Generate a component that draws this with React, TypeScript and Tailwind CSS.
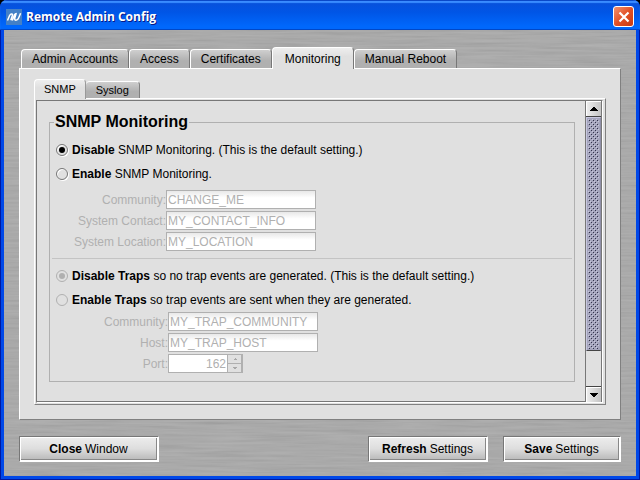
import React, { useState } from 'react';

const FONT = "font-['Liberation_Sans',Arial,sans-serif]";

function BrushedMetal() {
  return (
    <svg className="absolute inset-0 h-full w-full" preserveAspectRatio="none" aria-hidden="true">
      <filter id="brushed" x="0" y="0" width="100%" height="100%">
        <feTurbulence type="fractalNoise" baseFrequency="0.016 0.4" numOctaves="3" seed="8" />
        <feColorMatrix values="0.22 0 0 0 0.53  0.22 0 0 0 0.53  0.22 0 0 0 0.53  0 0 0 0 1" colorInterpolationFilters="sRGB" />
      </filter>
      <rect width="100%" height="100%" fill="#a2a2a2" />
      <rect width="100%" height="100%" filter="url(#brushed)" opacity="0.55" />
    </svg>
  );
}

function AppIcon() {
  return (
    <svg className="h-4 w-4 shrink-0" viewBox="0 0 16 16" aria-hidden="true">
      <rect width="16" height="16" fill="#4480c6" />
      <path d="M1.5 11.5 L3.6 6.5 Q4.6 4.5 6 5 Q6.8 5.4 6.3 6.8 L4.8 11.2 M6.3 11.5 L8.6 5.6 Q9.3 4.4 10.2 4.4 L8.8 9 Q8.3 11.2 10 11.2 Q11.8 11.2 12.6 9 L14.6 4.2" fill="none" stroke="#fff" strokeWidth="1.5" strokeLinejoin="round" />
    </svg>
  );
}

type TabProps = { label: string; selected: boolean; onSelect: () => void };

function MainTab({ label, selected, onSelect }: TabProps) {
  return (
    <button
      type="button"
      role="tab"
      aria-selected={selected}
      onClick={onSelect}
      className={
        selected
          ? 'relative -mb-px flex h-[22px] items-center rounded-t-sm border-t border-r border-l border-t-white border-r-[#777] border-l-white bg-linear-to-b from-[#eeeeee] to-[#e0e0e0] to-40% px-3'
          : 'flex h-[19px] items-center rounded-t-sm border-t border-r border-l border-t-white border-r-[#777] border-l-white bg-linear-to-b from-[#cfcfcf] to-[#b0b0b0] to-60% px-[10px]'
      }
    >
      {label}
    </button>
  );
}

function SubTab({ label, selected, onSelect }: TabProps) {
  return (
    <button
      type="button"
      role="tab"
      aria-selected={selected}
      onClick={onSelect}
      className={
        selected
          ? 'relative -mb-px flex h-5 items-center rounded-t-sm border-t border-r border-l border-t-white border-r-[#999] border-l-white bg-linear-to-b from-[#eeeeee] to-[#e0e0e0] to-40% px-[9px]'
          : 'flex h-[17px] items-center rounded-t-sm border-t border-r border-t-white border-r-[#808080] bg-linear-to-b from-[#cfcfcf] to-[#b0b0b0] to-60% px-[10px]'
      }
    >
      {label}
    </button>
  );
}

type ChoiceProps = {
  name: string;
  checked: boolean;
  disabled?: boolean;
  onSelect: () => void;
  strong: string;
  children: React.ReactNode;
};

function Choice({ name, checked, disabled, onSelect, strong, children }: ChoiceProps) {
  return (
    <label className="flex h-6 items-center gap-1">
      <input
        type="radio"
        name={name}
        checked={checked}
        disabled={disabled}
        onChange={onSelect}
        className="relative h-3 w-3 shrink-0 appearance-none rounded-full border border-[#777] shadow-[1px_1px_0_#fff,inset_1px_1px_0_#fff] before:absolute before:inset-[2px] before:rounded-full checked:before:bg-black disabled:border-[#b0b0b0] disabled:shadow-none checked:disabled:before:bg-[#b0b0b0]"
      />
      <span>
        <b>{strong}</b> {children}
      </span>
    </label>
  );
}

const boxStyle =
  'h-[19px] border border-[#b0b0b0] bg-linear-to-b from-[#e8e8e8] to-white to-40% pt-px text-[#b0b0b0] outline-none';

function Field({ id, label, value }: { id: string; label: string; value: string }) {
  return (
    <>
      <label htmlFor={id} className="pt-px text-right text-[#b0b0b0]">{label}</label>
      <input id={id} disabled defaultValue={value} className={`${boxStyle} w-[150px] px-px`} />
    </>
  );
}

function Arrow({ up, className }: { up?: boolean; className: string }) {
  return (
    <svg viewBox="0 0 8 4" className={className} aria-hidden="true" shapeRendering="crispEdges">
      <path d={up ? 'M3 0h2v1h1v1h1v1h1v1H0V3h1V2h1V1h1z' : 'M0 0h8v1H7v1H6v1H5v1H3V3H2V2H1V1H0z'} fill="currentColor" />
    </svg>
  );
}

function ThumbTexture() {
  return (
    <svg className="h-full w-full" aria-hidden="true" shapeRendering="crispEdges">
      <defs>
        <pattern id="grip" width="4" height="4" patternUnits="userSpaceOnUse">
          <rect width="4" height="4" fill="#a4a4bc" />
          <rect x="1" y="1" width="1" height="1" fill="#33334c" />
          <rect x="3" y="3" width="1" height="1" fill="#33334c" />
          <rect x="0" y="0" width="1" height="1" fill="#c8c8dc" />
          <rect x="2" y="2" width="1" height="1" fill="#c8c8dc" />
        </pattern>
      </defs>
      <rect width="100%" height="100%" fill="url(#grip)" />
    </svg>
  );
}

function ScrollBar() {
  const arrowButton =
    'flex h-[15px] shrink-0 items-center justify-center border-t border-l border-white bg-linear-to-r from-[#ededed] to-[#c4c4c4] text-black';
  return (
    <div className="flex w-[17px] shrink-0 flex-col border-x border-[#777] bg-[#e0e0e0]">
      <button type="button" aria-label="Scroll up" className={arrowButton}>
        <Arrow up className="h-1 w-2" />
      </button>
      <div className="flex flex-1 flex-col border-y border-[#444]">
        <div className="h-[234px] border-t border-r border-b border-l border-t-[#c8c8e0] border-r-[#9090a8] border-b-[#444] border-l-[#c8c8e0] bg-[#a4a4bc] p-px">
          <ThumbTexture />
        </div>
      </div>
      <button type="button" aria-label="Scroll down" className={arrowButton}>
        <Arrow className="h-1 w-2" />
      </button>
    </div>
  );
}

function ActionButton({ strong, rest, width }: { strong: string; rest: string; width: string }) {
  return (
    <button
      type="button"
      className={`${width} h-[26px] border border-t-[#777] border-r-white border-b-white border-l-[#777] bg-white p-px`}
    >
      <span className="flex h-full items-center justify-center gap-[3px] border-r border-b border-[#888] bg-linear-to-b from-[#ececec] via-[#dedede] to-[#bcbcbc]">
        <b>{strong}</b>
        <span>{rest}</span>
      </span>
    </button>
  );
}

const MAIN_TABS = ['Admin Accounts', 'Access', 'Certificates', 'Monitoring', 'Manual Reboot'];
const SUB_TABS = ['SNMP', 'Syslog'];

export default function App() {
  const [mainTab, setMainTab] = useState('Monitoring');
  const [subTab, setSubTab] = useState('SNMP');
  const [snmp, setSnmp] = useState(false);
  const [traps, setTraps] = useState(false);

  return (
    <div className="min-h-screen bg-black">
      <div className={`${FONT} flex min-h-screen flex-col overflow-hidden rounded-t-[7px] bg-[#0046e0] text-xs text-black`}>
        <header className="flex h-[30px] shrink-0 items-center gap-1 bg-linear-to-b from-[#0a4fd8] via-[#0055e6] via-40% to-[#0068fc] to-88% pt-[3px] pr-[6px] pl-[6px] shadow-[inset_0_1px_0_#0a48c8,inset_0_3px_1px_#3a8cff,inset_0_-1px_0_#0048c8]">
          <AppIcon />
          <h1 className="flex-1 font-['Open_Sans','Noto_Sans',sans-serif] text-xs font-bold text-white [text-shadow:1px_1px_0_#0a1883]">
            Remote Admin Config
          </h1>
          <button
            type="button"
            aria-label="Close"
            className="flex h-[21px] w-[21px] items-center justify-center rounded-[3px] border border-white bg-linear-to-br from-[#f0906c] via-[#e25026] to-[#c83a10]"
          >
            <svg viewBox="0 0 12 12" className="h-3 w-3" aria-hidden="true">
              <path d="M1.5 1.5 L10.5 10.5 M10.5 1.5 L1.5 10.5" stroke="#fff" strokeWidth="2.2" />
            </svg>
          </button>
        </header>

        <div className="flex flex-1 flex-col border-x border-b border-[#0018a0]">
          <div className="relative isolate flex flex-1 flex-col border-x-3 border-b-3 border-[#0048e8] px-[15px] pt-[17px] pb-[14px]">
            <div className="absolute inset-0 -z-10">
              <BrushedMetal />
            </div>

            <div role="tablist" className="flex items-end pl-[2px]">
              {MAIN_TABS.map((t) => (
                <MainTab key={t} label={t} selected={t === mainTab} onSelect={() => setMainTab(t)} />
              ))}
            </div>

            <main className="flex flex-1 flex-col border border-t-white border-r-[#808080] border-b-[#808080] border-l-white bg-[#e0e0e0] px-[14px] pt-[10px] pb-[14px]">
              <div role="tablist" className="flex items-end text-[11px]">
                {SUB_TABS.map((t) => (
                  <SubTab key={t} label={t} selected={t === subTab} onSelect={() => setSubTab(t)} />
                ))}
              </div>

              <div className="flex flex-1 flex-col border border-t-white border-r-[#808080] border-b-[#808080] border-l-white py-px pr-[2px] pl-px">
                <div className="flex flex-1 border border-t-[#777] border-r-white border-b-white border-l-[#777]">
                  <div className="flex-1 border-b border-[#777] pt-[11px] pr-[10px] pb-[17px] pl-3">
                    <fieldset className="border border-[#b0b0b0] px-[2px] pb-2">
                      <legend className="ml-[2px] px-px text-base leading-5 font-bold">SNMP Monitoring</legend>
                      <div className="pt-[6px] pl-1">
                        <Choice name="snmp" checked={!snmp} onSelect={() => setSnmp(false)} strong="Disable">
                          SNMP Monitoring. (This is the default setting.)
                        </Choice>
                        <Choice name="snmp" checked={snmp} onSelect={() => setSnmp(true)} strong="Enable">
                          SNMP Monitoring.
                        </Choice>
                        <div className="mt-1 grid grid-cols-[110px_150px] items-center gap-y-[2px]">
                          <Field id="community" label="Community:" value="CHANGE_ME" />
                          <Field id="contact" label="System Contact:" value="MY_CONTACT_INFO" />
                          <Field id="location" label="System Location:" value="MY_LOCATION" />
                        </div>
                      </div>
                      <hr className="mt-[7px] border-[#c4c4c4]" />
                      <div className="pt-[5px] pl-1">
                        <Choice name="traps" checked={!traps} disabled onSelect={() => setTraps(false)} strong="Disable Traps">
                          so no trap events are generated. (This is the default setting.)
                        </Choice>
                        <Choice name="traps" checked={traps} disabled onSelect={() => setTraps(true)} strong="Enable Traps">
                          so trap events are sent when they are generated.
                        </Choice>
                        <div className="grid grid-cols-[112px_150px] items-center gap-y-[2px]">
                          <Field id="trap-community" label="Community:" value="MY_TRAP_COMMUNITY" />
                          <Field id="trap-host" label="Host:" value="MY_TRAP_HOST" />
                          <label htmlFor="port" className="pt-px text-right text-[#b0b0b0]">Port:</label>
                          <div className="flex h-[19px] w-[75px] border border-[#b0b0b0]">
                            <input id="port" disabled defaultValue="162" className="min-w-0 flex-1 bg-white pt-px pr-px text-right text-[#b0b0b0]" />
                            <div className="flex w-[15px] flex-col divide-y divide-[#b0b0b0] border-r border-l border-[#b0b0b0]">
                              <button type="button" disabled aria-label="Increase port" className="flex flex-1 items-center justify-center text-[#a8a8a8]">
                                <Arrow up className="h-[2px] w-1" />
                              </button>
                              <button type="button" disabled aria-label="Decrease port" className="flex flex-1 items-center justify-center text-[#a8a8a8]">
                                <Arrow className="h-[2px] w-1" />
                              </button>
                            </div>
                          </div>
                        </div>
                      </div>
                    </fieldset>
                  </div>
                  <ScrollBar />
                </div>
              </div>
            </main>

            <footer className="mt-4 flex gap-[15px]">
              <ActionButton strong="Close" rest="Window" width="w-[140px]" />
              <div className="flex-1" />
              <ActionButton strong="Refresh" rest="Settings" width="w-[120px]" />
              <ActionButton strong="Save" rest="Settings" width="w-[118px]" />
            </footer>
          </div>
        </div>
      </div>
    </div>
  );
}
